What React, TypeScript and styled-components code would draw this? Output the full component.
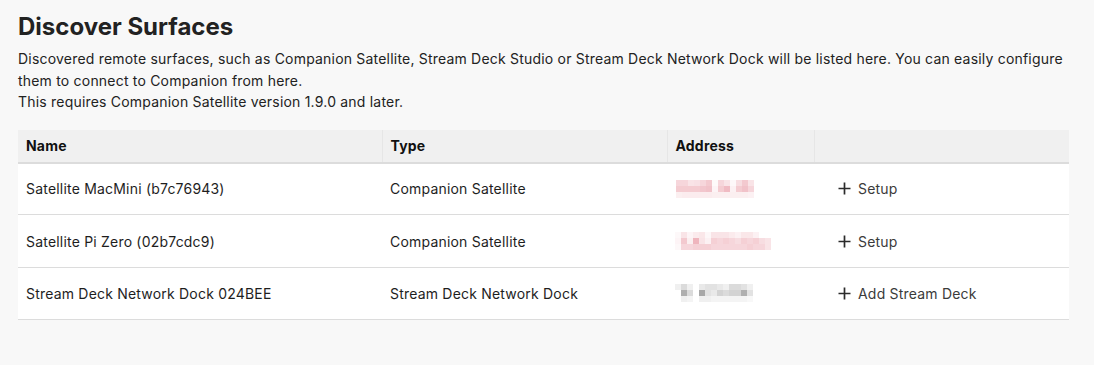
import React from "react";
import styled, { createGlobalStyle } from "styled-components";

const Global = createGlobalStyle`
  html, body { margin: 0; padding: 0; background: #f8f8f8; }
  body { font-family: Inter, "Noto Sans", sans-serif; color: #212121; }
`;

const Page = styled.div`
  padding: 12px 25px 0 18px;
`;

const Title = styled.h2`
  margin: 0 0 7px;
  font-size: 24px;
  line-height: 29px;
  font-weight: 700;
  color: #222;
`;

const Desc = styled.p`
  margin: 0 0 17px;
  font-size: 14px;
  letter-spacing: 0.2px;
  line-height: 21.5px;
  color: #222;
`;

const Table = styled.table`
  width: 100%;
  table-layout: fixed;
  border-collapse: collapse;
  font-size: 14px;
  letter-spacing: 0.2px;
  background: #fff;
`;

const Th = styled.th<{ $w?: number }>`
  box-sizing: border-box;
  text-align: left;
  font-weight: 700;
  color: #111;
  background: #f0f0f0;
  padding: 0 8px;
  height: 33px;
  border-bottom: 2px solid #dcdcdc;
  border-left: 1px solid #e6e6e6;
  width: ${(p) => (p.$w ? `${p.$w}px` : "auto")};
  &:first-child { border-left: none; }
`;

const Td = styled.td`
  box-sizing: border-box;
  padding: 0 8px;
  height: 52.4px;
  border-bottom: 1px solid #dcdcdc;
  color: #1e1e1e;
  vertical-align: middle;
`;

const ActionButton = styled.button`
  display: inline-flex;
  align-items: center;
  gap: 7px;
  border: none;
  background: none;
  padding: 4px 16px;
  font-family: inherit;
  font-size: 14px;
  letter-spacing: 0.2px;
  color: #3b3b3b;
  cursor: pointer;
`;

const Blur = styled.svg`
  display: block;
`;

type Tint = "pink" | "gray";

const PixelBlur: React.FC<{ grid: number[][]; tint: Tint; offset?: number }> = ({ grid, tint, offset = 0 }) => {
  const cell = 6;
  const cols = Math.max(...grid.map((r) => r.length));
  const color = tint === "pink" ? "rgb(225,120,135)" : "rgb(110,110,110)";
  return (
    <Blur width={cols * cell + offset} height={grid.length * cell}>
      {grid.map((row, y) =>
        row.map((a, x) => (
          <rect key={`${x}-${y}`} x={offset + x * cell} y={y * cell} width={cell} height={cell} fill={color} fillOpacity={a} />
        ))
      )}
    </Blur>
  );
};

const Plus = () => (
  <svg width="13" height="13" viewBox="0 0 13 13">
    <path d="M6.5 0.5v12M0.5 6.5h12" stroke="#2b2b2b" strokeWidth="1.7" />
  </svg>
);

const rows = [
  {
    name: "Satellite MacMini (b7c76943)",
    type: "Companion Satellite",
    action: "Setup",
    tint: "pink" as Tint,
    offset: 1,
    grid: [
      [0.3, 0.3, 0.2, 0.22, 0.3, 0.4, 0.04, 0.3, 0.2, 0.05, 0.25, 0.4, 0.2],
      [0.38, 0.38, 0.38, 0.38, 0.42, 0.45, 0.08, 0.38, 0.5, 0.1, 0.38, 0.45, 0.3],
      [0.12, 0.14, 0.14, 0.14, 0.14, 0.14, 0.12, 0.12, 0.12, 0.12, 0.12, 0.12, 0.1],
    ],
  },
  {
    name: "Satellite Pi Zero (02b7cdc9)",
    type: "Companion Satellite",
    action: "Setup",
    tint: "pink" as Tint,
    offset: 0,
    grid: [
      [0.05, 0.2, 0.08, 0.15, 0.18, 0.06, 0.2, 0.2, 0.2, 0.15, 0.1, 0.18, 0.18, 0.1, 0.0, 0.0],
      [0.08, 0.4, 0.12, 0.55, 0.2, 0.1, 0.35, 0.3, 0.35, 0.3, 0.25, 0.35, 0.3, 0.35, 0.25, 0.2],
      [0.05, 0.3, 0.3, 0.35, 0.35, 0.35, 0.3, 0.3, 0.3, 0.3, 0.3, 0.3, 0.35, 0.3, 0.3, 0.2],
    ],
  },
  {
    name: "Stream Deck Network Dock 024BEE",
    type: "Stream Deck Network Dock",
    action: "Add Stream Deck",
    tint: "gray" as Tint,
    offset: 0,
    grid: [
      [0.1, 0.25, 0.1, 0.0, 0.15, 0.2, 0.2, 0.15, 0.1, 0.25, 0.25, 0.2, 0.1, 0.0],
      [0.0, 0.55, 0.25, 0.0, 0.6, 0.2, 0.15, 0.3, 0.25, 0.3, 0.3, 0.55, 0.2, 0.0],
      [0.0, 0.1, 0.08, 0.0, 0.1, 0.1, 0.08, 0.08, 0.08, 0.08, 0.08, 0.08, 0.05, 0.0],
    ],
  },
];

export default function App() {
  return (
    <>
      <Global />
      <Page>
        <Title>Discover Surfaces</Title>
        <Desc>
          Discovered remote surfaces, such as Companion Satellite, Stream Deck Studio or Stream Deck Network Dock will be
          listed here. You can easily configure them to connect to Companion from here.
          <br />
          This requires Companion Satellite version 1.9.0 and later.
        </Desc>
        <Table>
          <thead>
            <tr>
              <Th $w={364}>Name</Th>
              <Th $w={285}>Type</Th>
              <Th $w={147}>Address</Th>
              <Th></Th>
            </tr>
          </thead>
          <tbody>
            {rows.map((r) => (
              <tr key={r.name}>
                <Td>{r.name}</Td>
                <Td>{r.type}</Td>
                <Td>
                  <PixelBlur grid={r.grid} tint={r.tint} offset={r.offset} />
                </Td>
                <Td>
                  <ActionButton>
                    <Plus />
                    {r.action}
                  </ActionButton>
                </Td>
              </tr>
            ))}
          </tbody>
        </Table>
      </Page>
    </>
  );
}
